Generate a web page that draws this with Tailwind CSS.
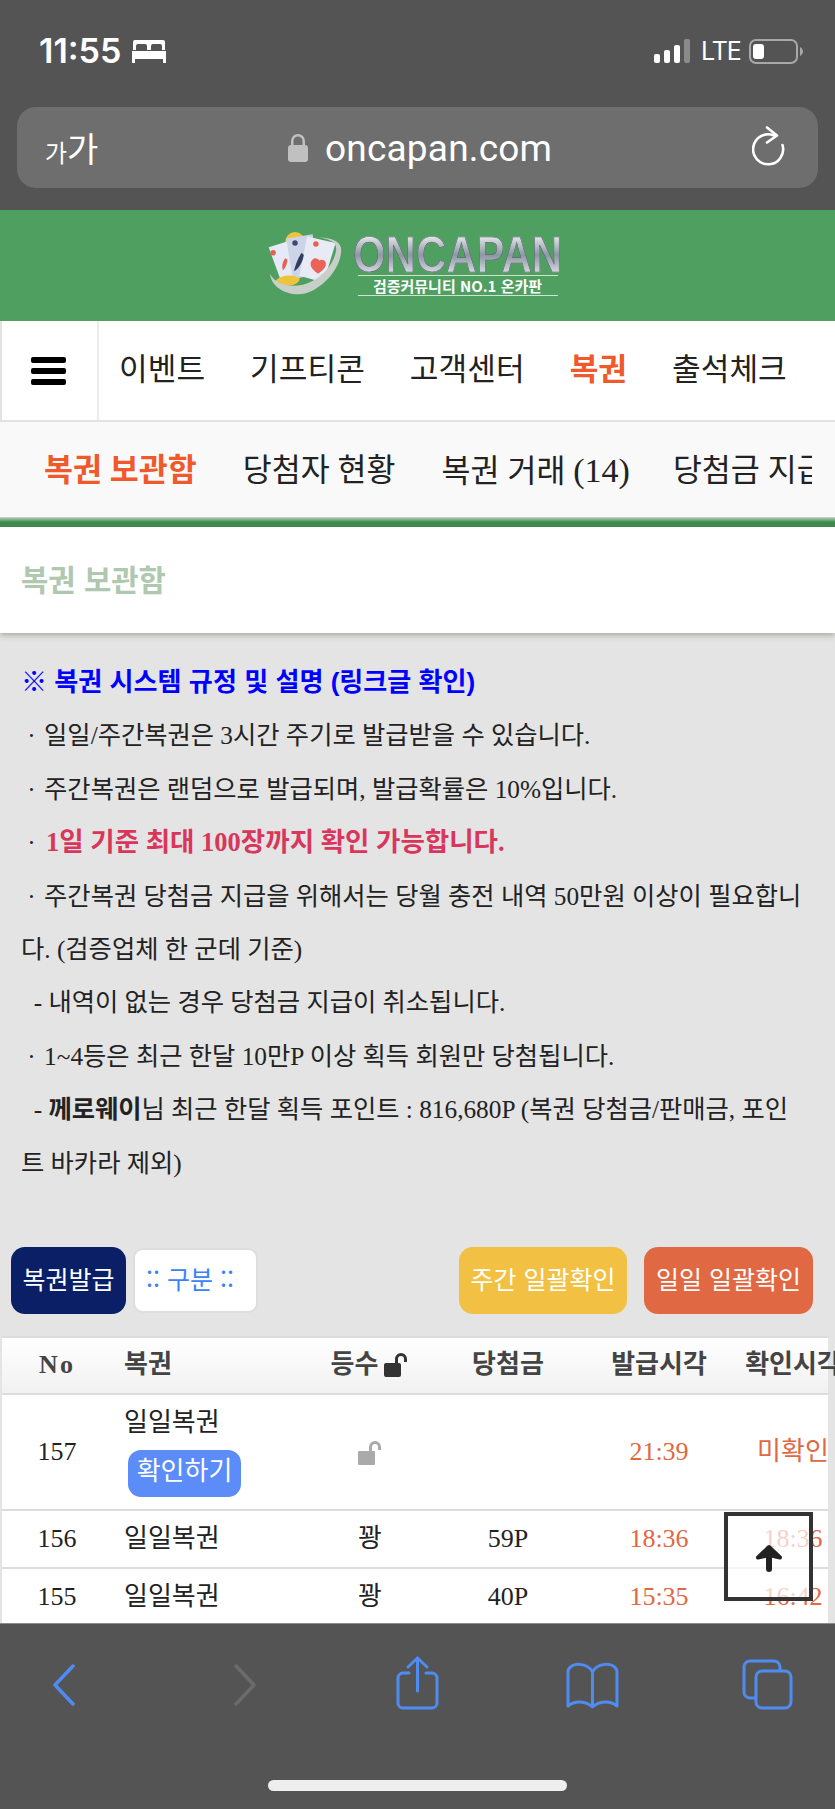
<!DOCTYPE html>
<html lang="ko">
<head>
<meta charset="UTF-8">
<title>복권 보관함</title>
<script src="https://cdn.jsdelivr.net/npm/@tailwindcss/browser@4"></script>
</head>
<body class="w-[835px] h-[1809px] overflow-hidden bg-[#e4e4e4] font-['Liberation_Serif','Noto_Sans_CJK_KR',serif]">
<div class="relative flex flex-col w-[835px] h-[1809px] overflow-hidden">

  <!-- safari top -->
  <header class="h-[210px] shrink-0 bg-[#545454] text-white font-['Inter','Noto_Sans_CJK_KR',sans-serif]">
    <div class="h-[107px] flex items-start pt-[32px] pl-[39px] pr-[32px]">
      <span class="text-[34px] leading-[38px] font-semibold w-[93px]">11:55</span>
      <svg class="mt-[8px]" width="34" height="23" viewBox="0 0 34 23" fill="#fff"><path d="M3 0h28a2 2 0 0 1 2 2v8h-3V6a2 2 0 0 0-2-2h-7a2 2 0 0 0-2 2v4h-4V6a2 2 0 0 0-2-2H6a2 2 0 0 0-2 2v4H1V2a2 2 0 0 1 2-2z"/><path d="M0 11h34v12h-3v-4H3v4H0z"/></svg>
      <div class="ml-auto flex items-start">
        <svg class="mt-[7px]" width="37" height="24" viewBox="0 0 37 24"><rect x="0" y="15" width="6" height="9" rx="2" fill="#fff"/><rect x="10" y="11" width="6" height="13" rx="2" fill="#fff"/><rect x="20" y="6" width="6" height="18" rx="2" fill="#fff"/><rect x="30" y="0" width="6" height="24" rx="2" fill="#8a8a8a"/></svg>
        <span class="ml-[10px] mt-[6px] text-[25px] leading-[26px] font-normal tracking-[-1px] w-[38px] block">LTE</span>
        <svg class="ml-[10px] mt-[7px]" width="54" height="25" viewBox="0 0 54 25" fill="none"><rect x="1" y="1" width="47" height="23" rx="6" stroke="#a8a8a8" stroke-width="2"/><rect x="4" y="5" width="11" height="15" rx="3" fill="#fff"/><path d="M51 8c2 1 3 3 3 4.500s-1 3.500-3 4.500z" fill="#a8a8a8"/></svg>
      </div>
    </div>
    <div class="relative h-[81px] mx-[17px] rounded-[19px] bg-[#6e6e6e] flex items-center">
      <span class="ml-[28px] font-['Noto_Sans_CJK_KR',sans-serif] flex items-baseline w-[60px] leading-none"><span class="text-[24px]">가</span><span class="text-[34px]">가</span></span>
      <div class="flex items-center ml-[183px]">
        <svg width="20" height="29" viewBox="0 0 20 29" fill="#c0c0c0"><path d="M3 13V8a7 7 0 0 1 14 0v5h-2.500V8a4.500 4.500 0 0 0-9 0v5z"/><rect x="0" y="12" width="20" height="17" rx="3"/></svg>
        <span class="ml-[17px] pt-[3px] text-[37px] leading-[44px] font-['Roboto',sans-serif] tracking-[0.2px]">oncapan.com</span>
      </div>
      <svg class="absolute right-[33px] top-[19px]" width="33" height="41" viewBox="0 0 33 41" fill="none" stroke="#fff" stroke-width="2.600" stroke-linecap="round" stroke-linejoin="round"><path d="M22 9.500A15 15 0 1 0 30.500 19"/><path d="M15 1.500l10 8-10 7"/></svg>
    </div>
  </header>

  <!-- page -->
  <main class="h-[1413px] shrink-0 overflow-hidden">
    <div class="h-[111px] bg-[#4fa060] flex justify-center items-center pr-[8px]">
      <svg width="80" height="68" viewBox="0 0 72 62">
        <circle cx="26" cy="9" r="9" fill="#f0c33c"/>
        <path d="M2 14l19-6 8 34-15 5z" fill="#e6eaf6"/>
        <path d="M18 6l24-4 6 36-24 5z" fill="#cdd4e8"/>
        <path d="M37 4l26 6-11 36-22-6z" fill="#e8ebf6"/>
        <circle cx="6" cy="19" r="2.500" fill="#e8604f"/><circle cx="26" cy="10" r="2.500" fill="#3c4a70"/><circle cx="45" cy="11" r="2.500" fill="#e8604f"/>
        <path d="M32 19c-4 6-6 12-7 17 5-3 8-9 9-15z" fill="#2f3d63"/>
        <path d="M17 24c-3 4-3 8-2 11 3-3 4-7 4-10z" fill="#e8604f"/>
        <path d="M47 38c-6-4-9-9-5-13 2-2 5-1 6 1 2-1 5-1 6 2 1 4-3 7-7 10z" fill="#ea6258"/>
        <path d="M8 45c4-6 16-7 22-3 1 3-3 7-11 7-5 0-9-1-11-4z" fill="#f0c33c"/>
        <path d="M3 38c2 14 18 21 32 18 16-4 32-22 33-38 1-8-6-13-20-13 14 2 17 7 15 14-3 13-16 26-30 29C20 51 8 47 3 38z" fill="#c8cfc8"/>
      </svg>
      <div class="ml-[8px] w-[208px] flex flex-col items-center">
        <span class="h-[40px] block text-[42px] leading-[40px] font-bold font-['Liberation_Sans',sans-serif] scale-y-[1.2] bg-linear-to-b from-white via-[#8d97a3] to-[#f2f4f6] bg-clip-text text-transparent [-webkit-text-stroke:0.6px_#59636e]">ONCAPAN</span>
        <span class="w-[200px] h-[21px] border-y border-[#cfe3d3] text-white text-[15px] leading-[19px] font-bold text-center font-['Noto_Sans_CJK_KR',sans-serif]">검증커뮤니티 NO.1 온카판</span>
      </div>
    </div>

    <nav class="h-[101px] bg-white flex border-b-2 border-[#e2e2e2] border-l-2 font-['Noto_Sans_CJK_KR',sans-serif] text-[31.200px] text-[#222]">
      <div class="w-[97px] h-[99px] border-r-2 border-[#ececec] shrink-0 flex flex-col justify-center gap-[5px] pl-[29px]">
        <span class="block w-[35px] h-[6px] rounded-[2px] bg-black"></span>
        <span class="block w-[35px] h-[6px] rounded-[2px] bg-black"></span>
        <span class="block w-[35px] h-[6px] rounded-[2px] bg-black"></span>
      </div>
      <div class="flex items-center gap-[45px] pl-[20px] pb-[8px] leading-none whitespace-nowrap">
        <span>이벤트</span><span>기프티콘</span><span>고객센터</span><span class="text-[#f0592b] font-bold">복권</span><span>출석체크</span>
      </div>
    </nav>

    <div class="h-[95px] w-[835px] bg-[#f9f9f9] pl-[44px] pt-[3px] flex items-center gap-[46px] text-[31.500px] leading-none text-[#222] whitespace-nowrap overflow-hidden">
      <span class="text-[#f0592b] font-bold">복권 보관함</span><span>당첨자 현황</span><span>복권 거래 <span class="text-[34px] mr-[-3px]">(14)</span></span><span class="inline-block w-[139px] overflow-hidden shrink-0">당첨금 지급</span>
    </div>
    <div class="h-[10px] bg-linear-to-b from-[#c5d6c8] via-[#3f8c4f] to-[#3f8c4f]"></div>

    <div class="h-[106px] bg-white shadow-[0_2px_6px_rgba(90,90,70,0.45)] flex items-center pl-[21px] pb-[2px] text-[29.700px] font-bold text-[#b0c7b0] font-['Noto_Sans_CJK_KR',sans-serif]">복권 보관함</div>

    <section class="pt-[23px] pl-[21px] text-[25.300px] leading-[53.400px] text-[#222] whitespace-nowrap">
      <p class="font-bold text-[26.100px] text-[#0000ff] font-['Liberation_Sans','Noto_Sans_CJK_KR',sans-serif]">※ 복권 시스템 규정 및 설명 (링크글 확인)</p>
      <p>&nbsp;<span class="mr-[2px]">·</span> 일일/주간복권은 3시간 주기로 발급받을 수 있습니다.</p>
      <p>&nbsp;<span class="mr-[2px]">·</span> 주간복권은 랜덤으로 발급되며, 발급확률은 10%입니다.</p>
      <p>&nbsp;<span class="mr-[4px]">·</span> <b class="text-[26.500px] text-[#d9365c]">1일 기준 최대 100장까지 확인 가능합니다.</b></p>
      <p>&nbsp;<span class="mr-[2px]">·</span> 주간복권 당첨금 지급을 위해서는 당월 충전 내역 50만원 이상이 필요합니</p>
      <p>다. (검증업체 한 군데 기준)</p>
      <p>&nbsp; - 내역이 없는 경우 당첨금 지급이 취소됩니다.</p>
      <p>&nbsp;<span class="mr-[2px]">·</span> 1~4등은 최근 한달 10만P 이상 획득 회원만 당첨됩니다.</p>
      <p>&nbsp; - <b>께로웨이</b>님 최근 한달 획득 포인트 : 816,680P (복권 당첨금/판매금, 포인</p>
      <p>트 바카라 제외)</p>
    </section>

    <div class="mt-[57px] h-[67px] flex items-center pl-[11px] pr-[22px] text-[25px] font-['Noto_Sans_CJK_KR',sans-serif] text-white whitespace-nowrap">
      <span class="w-[115px] h-[67px] rounded-[14px] bg-[#0a1f66] flex items-center justify-center pb-[4px]">복권발급</span>
      <span class="ml-[7px] w-[125px] h-[65px] rounded-[10px] bg-white border-2 border-[#dedede] text-[#3a82f7] flex items-center pl-[11px] pb-[4px]">:: 구분 ::</span>
      <span class="ml-auto w-[168px] h-[67px] rounded-[14px] bg-[#f2c144] flex items-center justify-center pb-[4px]">주간 일괄확인</span>
      <span class="ml-[17px] w-[169px] h-[67px] rounded-[14px] bg-[#e06842] flex items-center justify-center pb-[4px]">일일 일괄확인</span>
    </div>

    <div class="mt-[22px] ml-[2px] w-[826px] bg-white border-t-2 border-[#dcdcdc] text-[26px] leading-none text-[#222] whitespace-nowrap">
      <div class="h-[57px] border-b-2 border-[#dcdcdc] bg-linear-to-b from-white to-[#f1f1f1] grid grid-cols-[110px_188px_140px_136px_166px_102px] items-center text-center font-bold text-[#444] pb-[2px]">
        <span class="tracking-[2px]">No</span><span class="text-left pl-[12px]">복권</span>
        <span class="flex items-center justify-center gap-[6px]">등수<svg width="25" height="25" viewBox="0 0 25 25" fill="#333"><rect x="0" y="11" width="17" height="14" rx="2"/><path d="M11 12V7a6 6 0 0 1 12 0v3h-3V7a3 3 0 0 0-6 0v5z"/></svg></span>
        <span>당첨금</span><span>발급시각</span><span>확인시각</span>
      </div>
      <div class="h-[116px] border-b-2 border-[#dcdcdc] grid grid-cols-[110px_188px_140px_136px_166px_102px] items-center text-center">
        <span>157</span>
        <div class="text-left pl-[12px] flex flex-col items-start"><span class="leading-[30px]">일일복권</span><span class="ml-[4px] mt-[12px] w-[113px] h-[47px] rounded-[13px] bg-[#5b8cf7] text-white flex items-center justify-center pb-[3px]">확인하기</span></div>
        <span class="flex justify-center"><svg width="25" height="25" viewBox="0 0 25 25" fill="#aaa"><rect x="0" y="11" width="17" height="14" rx="1"/><path d="M11 12V7a6 6 0 0 1 12 0v3h-3V7a3 3 0 0 0-6 0v5z"/></svg></span>
        <span></span><span class="text-[#e06842]">21:39</span><span class="text-[#e06842]">미확인</span>
      </div>
      <div class="h-[58px] border-b-2 border-[#dcdcdc] grid grid-cols-[110px_188px_140px_136px_166px_102px] items-center text-center">
        <span>156</span><span class="text-left pl-[12px]">일일복권</span><span>꽝</span><span>59P</span><span class="text-[#e06842]">18:36</span><span class="text-[#e06842]">18:36</span>
      </div>
      <div class="h-[59px] pb-[4px] grid grid-cols-[110px_188px_140px_136px_166px_102px] items-center text-center">
        <span>155</span><span class="text-left pl-[12px]">일일복권</span><span>꽝</span><span>40P</span><span class="text-[#e06842]">15:35</span><span class="text-[#e06842]">16:42</span>
      </div>
    </div>
  </main>

  <!-- scroll to top button -->
  <div class="absolute left-[724px] top-[1512px] w-[89px] h-[89px] border-[4px] border-[#333] bg-white/70 flex items-center justify-center pt-[3px]">
    <svg width="30" height="28" viewBox="0 0 30 28" fill="#222" stroke="#222" stroke-linecap="round" stroke-linejoin="round"><path d="M15 25V8" stroke-width="6" fill="none"/><path d="M15 3L4 13.500 15 11l11 2.500z" stroke-width="4"/></svg>
  </div>

  <!-- safari bottom -->
  <footer class="relative flex-1 bg-[#545454] border-t border-[#8c8c8c]">
    <div class="flex items-start h-[140px]">
      <svg class="absolute left-[52px] top-[40px]" width="24" height="42" viewBox="0 0 24 42" fill="none" stroke="#4f8cf2" stroke-width="3.500" stroke-linecap="round" stroke-linejoin="round"><path d="M21 2L3 21l18 19"/></svg>
      <svg class="absolute left-[233px] top-[40px]" width="24" height="42" viewBox="0 0 24 42" fill="none" stroke="#6b6b6b" stroke-width="3.500" stroke-linecap="round" stroke-linejoin="round"><path d="M3 2l18 19L3 40"/></svg>
      <svg class="absolute left-[396px] top-[32px]" width="43" height="54" viewBox="0 0 43 54" fill="none" stroke="#4f8cf2" stroke-width="3" stroke-linecap="round" stroke-linejoin="round"><path d="M13 17H7a5 5 0 0 0-5 5v25a5 5 0 0 0 5 5h29a5 5 0 0 0 5-5V22a5 5 0 0 0-5-5h-6"/><path d="M21.500 35V2"/><path d="M12 11l9.500-9L31 11"/></svg>
      <svg class="absolute left-[566px] top-[38px]" width="53" height="47" viewBox="0 0 53 47" fill="none" stroke="#4f8cf2" stroke-width="3" stroke-linecap="round" stroke-linejoin="round"><path d="M26.500 10C22 1 5 -1 2 9v35c7-6 18-5 24.500 1 6.500-6 17.500-7 24.500-1V9C48 -1 31 1 26.500 10z"/><path d="M26.500 10v34"/></svg>
      <svg class="absolute left-[742px] top-[35px]" width="51" height="51" viewBox="0 0 51 51" fill="none" stroke="#4f8cf2" stroke-width="3" stroke-linejoin="round"><rect x="14" y="12" width="35" height="37" rx="6"/><path d="M14 39H8a6 6 0 0 1-6-6V8a6 6 0 0 1 6-6h24a6 6 0 0 1 6 6v4"/></svg>
    </div>
    <div class="absolute left-[268px] top-[156px] w-[299px] h-[11px] rounded-full bg-[#eeeeee]"></div>
  </footer>
</div>
</body>
</html>
